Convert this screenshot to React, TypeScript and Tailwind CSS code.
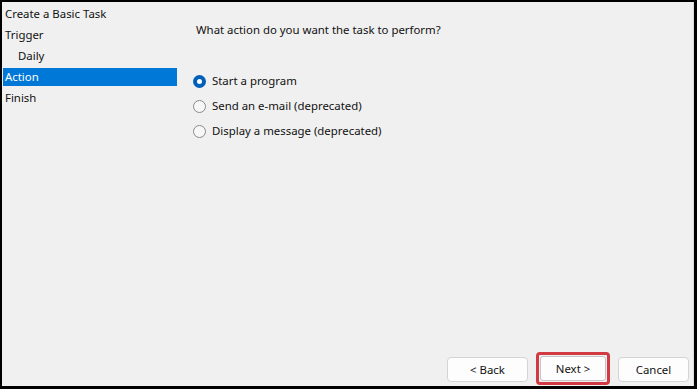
import React from 'react';

const steps = [
  { label: 'Create a Basic Task', indent: false },
  { label: 'Trigger', indent: false },
  { label: 'Daily', indent: true },
  { label: 'Action', indent: false, active: true },
  { label: 'Finish', indent: false },
];

const options = [
  { label: 'Start a program', checked: true },
  { label: 'Send an e-mail (deprecated)', checked: false },
  { label: 'Display a message (deprecated)', checked: false },
];

function Radio({ checked }: { checked: boolean }) {
  if (checked) {
    return (
      <span className="w-[13px] h-[13px] rounded-full bg-[#005fb8] flex items-center justify-center">
        <span className="w-[5px] h-[5px] rounded-full bg-white" />
      </span>
    );
  }
  return <span className="w-[13px] h-[13px] rounded-full border border-[#8a8a8a] bg-[#f7f7f7]" />;
}

export default function App() {
  return (
    <div
      className="w-[697px] h-[389px] bg-black pt-[2px] pl-[2px] pr-[3px] pb-[3px] text-[11.4px] text-[#111]"
      style={{ fontFamily: '"Noto Sans", "Segoe UI", sans-serif' }}
    >
      <div className="w-full h-full bg-[#f0f0f0] flex flex-col border-r border-[#dcdcdc]">
        <div className="flex flex-1">
          {/* wizard steps */}
          <div className="w-[175px] pt-[3px] pl-[1px] flex flex-col gap-[3px]">
            {steps.map((s) => (
              <div
                key={s.label}
                className={`h-[18px] leading-[18px] ${s.indent ? 'pl-[15px]' : 'pl-[2px]'} ${
                  s.active ? 'bg-[#0078d7] text-white' : ''
                }`}
              >
                {s.label}
              </div>
            ))}
          </div>

          {/* page content */}
          <div className="flex-1 pl-[16px] pt-[19px]">
            <div className="leading-[18px] pl-[3px]">What action do you want the task to perform?</div>
            <div className="mt-[33px] flex flex-col gap-[7px]">
              {options.map((o) => (
                <div key={o.label} className="flex items-center h-[18px] gap-[6px]">
                  <Radio checked={o.checked} />
                  <span className="leading-[18px]">{o.label}</span>
                </div>
              ))}
            </div>
          </div>
        </div>

        {/* buttons */}
        <div className="flex items-end justify-end gap-[8px] pr-[4px] h-[33px]">
          <button className="w-[81px] h-[25px] mb-[4px] bg-[#fdfdfd] border border-[#d4d4d4] rounded-[4px] leading-none">
            &lt; Back
          </button>
          <div className="border-[3px] border-[#d13a42] rounded-[4px] p-[1px] mb-[1px]">
            <button className="w-[66px] h-[25px] bg-[#fdfdfd] border border-[#c4c4c4] rounded-[3px] leading-none">
              Next &gt;
            </button>
          </div>
          <button className="w-[71px] h-[25px] mb-[4px] bg-[#fdfdfd] border border-[#d4d4d4] rounded-[4px] leading-none">
            Cancel
          </button>
        </div>
      </div>
    </div>
  );
}
